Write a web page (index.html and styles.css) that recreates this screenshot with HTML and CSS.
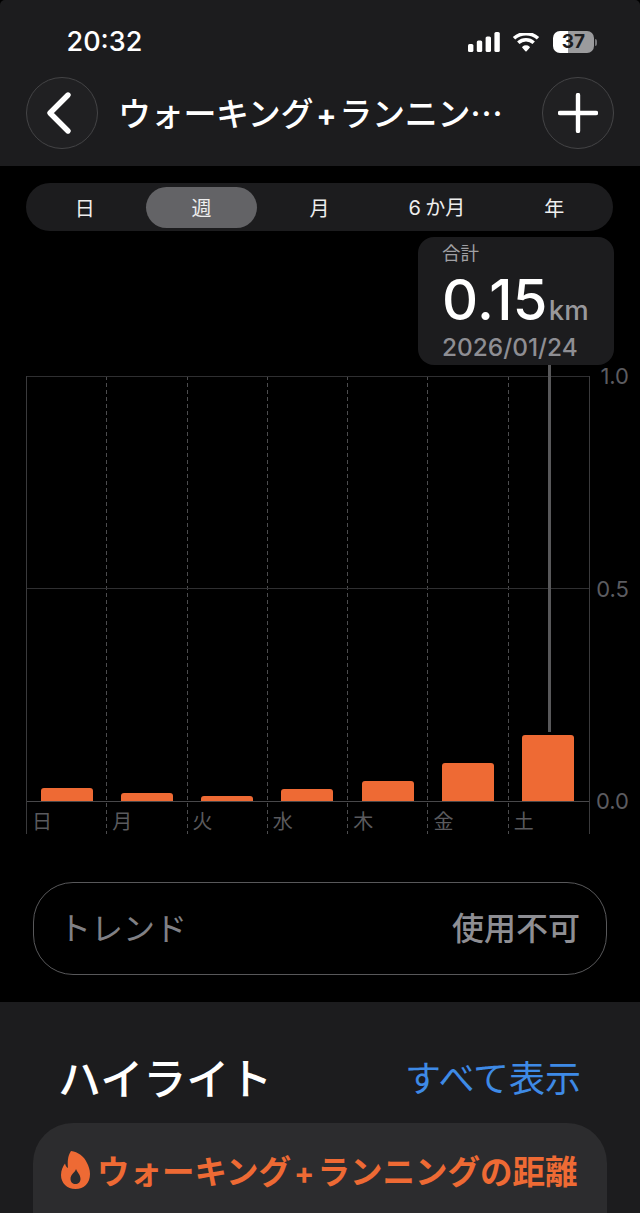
FILE: index.html
```html
<!DOCTYPE html>
<html lang="ja">
<head>
<meta charset="utf-8">
<title>ウォーキング+ランニングの距離</title>
<link rel="stylesheet" href="styles.css">
</head>
<body>
<div class="screen">
  <header class="header">
    <div class="status">
      <span class="time">20:32</span>
      <div class="status-icons">
        <svg class="signal" width="32" height="20" viewBox="0 0 32 20"><rect x="0" y="12" width="5.4" height="8" rx="1.6"/><rect x="8.8" y="8.5" width="5.4" height="11.5" rx="1.6"/><rect x="17.6" y="4.5" width="5.4" height="15.5" rx="1.6"/><rect x="26.4" y="0" width="5.4" height="20" rx="1.6"/></svg>
        <svg class="wifi" width="28" height="20" viewBox="0 0 28 20"><path d="M14 17.6 10.9 14.3C12.6 12.7 15.4 12.7 17.1 14.3Z" fill="#fff" stroke="#fff" stroke-width="1.6" stroke-linejoin="round"/><path d="M6.3 9.7C10.6 5.7 17.4 5.7 21.7 9.7M2 5.3C8.7-.9 19.3-.9 26 5.3" fill="none" stroke="#fff" stroke-width="3.5" stroke-linecap="butt"/></svg>
        <div class="battery"><span class="battery-body">37</span><span class="battery-nub"></span></div>
      </div>
    </div>
    <nav class="nav">
      <button class="round-btn" aria-label="戻る">
        <svg class="chevron" width="30" height="44" viewBox="0 0 30 44"><path d="M24 4 6 22l18 18" fill="none" stroke="#fff" stroke-width="5.4" stroke-linecap="round" stroke-linejoin="round"/></svg>
      </button>
      <h1 class="title">ウォーキング<span class="plus">+</span>ランニン…</h1>
      <button class="round-btn" aria-label="追加">
        <svg width="40" height="40" viewBox="0 0 40 40"><path d="M20 2v36M2 20h36" fill="none" stroke="#fff" stroke-width="4.4" stroke-linecap="round"/></svg>
      </button>
    </nav>
  </header>

  <div class="segments">
    <span class="segment">日</span>
    <span class="segment active">週</span>
    <span class="segment">月</span>
    <span class="segment"><span class="six">6</span> か月</span>
    <span class="segment">年</span>
  </div>

  <section class="chart-wrap">
    <div class="tooltip">
      <div class="tip-label">合計</div>
      <div class="tip-value"><span class="tip-num">0.15</span><span class="tip-unit">km</span></div>
      <div class="tip-date">2026/01/24</div>
    </div>
    <div class="tip-line"></div>
    <div class="chart">
      <div class="midline"></div>
      <div class="col"><div class="plot"><div class="bar" style="height:13px"></div></div><span class="day">日</span></div>
      <div class="col"><div class="plot"><div class="bar" style="height:8px"></div></div><span class="day">月</span></div>
      <div class="col"><div class="plot"><div class="bar" style="height:5px"></div></div><span class="day">火</span></div>
      <div class="col"><div class="plot"><div class="bar" style="height:12.500px"></div></div><span class="day">水</span></div>
      <div class="col"><div class="plot"><div class="bar" style="height:20px"></div></div><span class="day">木</span></div>
      <div class="col"><div class="plot"><div class="bar" style="height:38px"></div></div><span class="day">金</span></div>
      <div class="col"><div class="plot"><div class="bar" style="height:66px"></div></div><span class="day">土</span></div>
    </div>
    <div class="y-axis"><span>1.0</span><span>0.5</span><span>0.0</span></div>
  </section>

  <div class="trend">
    <span class="trend-label">トレンド</span>
    <span class="trend-value">使用不可</span>
  </div>

  <section class="highlights">
    <div class="high-head">
      <h2 class="high-title">ハイライト</h2>
      <span class="high-link">すべて表示</span>
    </div>
    <div class="card">
      <div class="card-title">
        <svg class="flame" width="32" height="40" viewBox="0 0 32 40"><path fill-rule="evenodd" d="M11 1c7 1 13 5 16 12 1.500 3 3 6.500 3 11 0 9-6 15-14.500 15S1 33 1 25c0-5 2-8.500 4-11.500 .6 2 1.300 3.500 3 4.500C7.500 12 7.500 6 11 1ZM16 19c-.5 3-5.500 5-5.500 10 0 3 2.200 5 5 5s5-2 5-5c0-4.500-3.200-6.500-4.500-10Z" fill="#ee6a34"/></svg>
        <span>ウォーキング<span class="plus">+</span>ランニングの距離</span>
      </div>
    </div>
  </section>
</div>
</body>
</html>
```
FILE: styles.css
```css
* { box-sizing: border-box; }
html, body { margin: 0; padding: 0; background: #000; }
body { font-family: Inter, "Noto Sans CJK JP", sans-serif; }
.screen { width: 640px; height: 1213px; overflow: hidden; background: #000; color: #fff; }

.header { height: 166px; background: #1c1c1e; border-radius: 5px 5px 0 0; padding: 0 26px; }
.status { height: 77px; display: flex; justify-content: space-between; padding: 24px 17px 0 40.500px; }
.time { font-size: 27px; line-height: 36px; font-weight: 500; }
.status-icons { display: flex; align-items: flex-start; padding-top: 8px; }
.signal { fill: #fff; }
.wifi { margin-left: 12px; margin-top: 1px; }
.battery { display: flex; align-items: center; margin-left: 13px; margin-top: -1px; }
.battery-body { width: 41px; height: 22px; border-radius: 7px; background: linear-gradient(90deg, #fff 0 15px, #9b9b9d 15px); color: #1c1c1e; font-size: 19px; line-height: 22px; font-weight: 700; text-align: center; }
.battery-nub { width: 2px; height: 7px; margin-left: 1px; background: #77777a; border-radius: 0 2px 2px 0; }

.nav { display: flex; align-items: center; justify-content: space-between; height: 72px; }
.round-btn { flex: none; width: 72px; height: 72px; padding: 0; border-radius: 50%; border: 1.5px solid #444446; background: #202022; display: flex; align-items: center; justify-content: center; }
.chevron { margin-right: 6px; }
.title { margin: 0 0 0 20px; flex: 1; height: 72px; font-family: "Noto Sans CJK JP", sans-serif; font-size: 33px; line-height: 70px; font-weight: 500; white-space: nowrap; letter-spacing: -.3px; }
.plus { font-family: Inter, sans-serif; font-weight: 700; margin: 0 3px; font-size: 30px; line-height: 1; }

.segments { margin: 17px 27px 0 26px; height: 48px; border-radius: 24px; background: #1c1c1e; display: grid; grid-template-columns: repeat(5, 1fr); align-items: center; }
.segment { font-family: "Noto Sans CJK JP", sans-serif; font-size: 20px; line-height: 41px; text-align: center; color: #eee; }
.segment.active { width: 111px; justify-self: center; margin-left: -1px; border-radius: 20.500px; background: #636366; }
.six { font-family: Inter, sans-serif; }

.chart-wrap { position: relative; margin: 145px 0 0 26px; display: flex; height: 458px; }
.tooltip { position: absolute; z-index: 2; left: 392px; top: -139px; width: 196px; height: 128px; border-radius: 16px; background: #1c1c1e; padding: 2px 0 0 25px; }
.tip-label { font-family: "Noto Sans CJK JP", sans-serif; font-size: 18.500px; line-height: 26px; color: #a0a0a4; margin-left: -1px; }
.tip-value { display: flex; align-items: baseline; height: 60px; margin-top: 5px; margin-left: -1px; }
.tip-num { font-size: 56px; line-height: 60px; font-weight: 500; letter-spacing: .3px; }
.tip-unit { font-size: 27.500px; line-height: 30px; font-weight: 500; color: #98989c; margin-left: 1px; }
.tip-date { font-size: 24.400px; line-height: 30px; font-weight: 500; color: #8e8e93; margin-top: 2px; margin-left: -1px; white-space: nowrap; }
.tip-line { position: absolute; z-index: 1; left: 522px; top: -12px; width: 3px; height: 368px; background: #58585a; }

.chart { position: relative; display: flex; flex: none; width: 564px; height: 458px; border-left: 1px solid #3a3a3c; border-right: 1px solid #3a3a3c; }
.midline { position: absolute; left: 0; right: 0; top: 212px; height: 1px; background: #2f2f31; }
.col { flex: 1; display: flex; flex-direction: column; background: repeating-linear-gradient(180deg, #4c4c4e 0 4px, transparent 4px 7px) right top / 1px 100% no-repeat; }
.col:last-of-type { background: none; }
.plot { flex: none; height: 426px; display: flex; align-items: flex-end; justify-content: center; border-top: 1px solid #2f2f31; border-bottom: 1px solid #48484a; }
.bar { width: 52px; margin-right: 1px; background: #ee6a34; border-radius: 3px 3px 0 0; }
.day { font-family: "Noto Sans CJK JP", sans-serif; font-size: 20px; line-height: 27px; color: #5a5a5e; padding-left: 5px; margin-top: 5px; }

.y-axis { width: 39px; flex: none; height: 449px; margin-top: -12px; display: flex; flex-direction: column; justify-content: space-between; font-size: 22px; line-height: 24px; color: #5c5c60; text-align: right; }

.trend { margin: 48px 33px 0; height: 93px; border: 1.500px solid #58585a; border-radius: 40px; display: flex; justify-content: space-between; align-items: center; padding: 0 26px 5px 25px; font-family: "Noto Sans CJK JP", sans-serif; font-size: 32px; }
.trend-label { font-size: 32px; color: #808085; font-weight: 400; }
.trend-value { color: #8e8e93; font-weight: 500; }

.highlights { margin-top: 27px; height: 211px; background: #1c1c1e; padding: 43px 33px 0; font-family: "Noto Sans CJK JP", sans-serif; }
.high-head { display: flex; justify-content: space-between; align-items: center; height: 62px; padding: 0 26px 0 25px; margin-bottom: 16px; }
.high-title { margin: 0; font-size: 43px; font-weight: 500; line-height: 62px; }
.high-link { font-size: 36px; line-height: 62px; color: #3e8ae6; }
.card { height: 110px; background: #2c2c2e; border-radius: 40px 40px 0 0; padding: 27px 0 0 27px; }
.card-title { display: flex; align-items: center; color: #ee6a34; font-size: 32.500px; line-height: 40px; font-weight: 700; white-space: nowrap; gap: 5px; }
.card-title .plus { font-size: 30px; margin: 0 3px; }
.flame { flex: none; }
```
